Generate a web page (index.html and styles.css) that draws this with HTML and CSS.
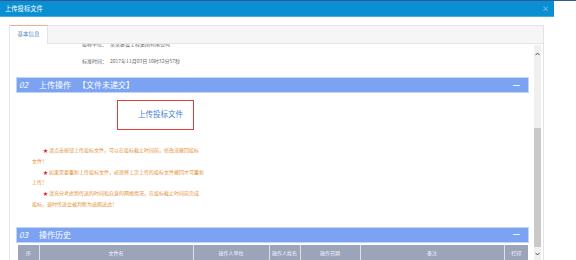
FILE: index.html
```html
<!DOCTYPE html>
<html lang="zh-CN">
<head>
  <meta charset="UTF-8">
  <meta name="viewport" content="width=device-width, initial-scale=1.0">
  <title>上传投标文件</title>
  <link rel="stylesheet" href="styles.css">
</head>
<body>
  <div class="top-strip"></div>

  <div class="dialog">
    <div class="dlg-title">
      <span>上传投标文件</span>
      <span class="dlg-close">×</span>
    </div>

    <div class="dlg-body">
      <div class="tabs">
        <div class="tab-head">
          <div class="tab active">基本信息</div>
        </div>

        <div class="tab-main">
          <div class="scroll-view">
            <div class="scroll-inner">
              <div class="info-row">
                <span class="lbl">投标单位：</span>
                <span>某某建设工程集团有限公司</span>
              </div>
              <div class="info-row">
                <span class="lbl">标准时间：</span>
                <span>2017年11月03日 10时32分57秒</span>
              </div>

              <div class="sec-bar">
                <span class="sec-no">02</span>
                <span class="sec-name">上传操作</span>
                <span class="sec-state">【文件未递交】</span>
                <span class="sec-fold"></span>
              </div>

              <div class="upload-wrap">
                <a href="#" class="upload-btn">上传投标文件</a>
              </div>

              <div class="tips">
                <p><span class="star">★</span>请点击按钮上传投标文件，可以在投标截止时间前，修改或撤回投标<br>文件！</p>
                <p><span class="star">★</span>如果需要重新上传投标文件，必须将上次上传的投标文件撤回才可重新<br>上传！</p>
                <p><span class="star">★</span>请充分考虑到传送的时间和自身的网络情况，在投标截止时间前完成<br>投标，逾时传送会被判断为逾期送达！</p>
              </div>

              <div class="sec-bar sec-bar-2">
                <span class="sec-no">03</span>
                <span class="sec-name">操作历史</span>
                <span class="sec-fold"></span>
              </div>

              <table class="hist">
                <colgroup>
                  <col style="width:21px">
                  <col style="width:154px">
                  <col style="width:76px">
                  <col style="width:31px">
                  <col style="width:60px">
                  <col style="width:144px">
                  <col style="width:24px">
                </colgroup>
                <thead>
                  <tr>
                    <th>序</th>
                    <th>文件名</th>
                    <th>操作人单位</th>
                    <th>操作人姓名</th>
                    <th>操作日期</th>
                    <th>备注</th>
                    <th>打印</th>
                  </tr>
                </thead>
              </table>
            </div>
          </div>

          <div class="vscroll">
            <div class="vs-btn vs-up">
              <svg width="5" height="4" viewBox="0 0 5 4"><path d="M0.5 3.2 L2.5 1 L4.5 3.2" fill="none" stroke="#555" stroke-width="1"/></svg>
            </div>
            <div class="vs-track"></div>
            <div class="vs-thumb"></div>
            <div class="vs-btn vs-down">
              <svg width="5" height="4" viewBox="0 0 5 4"><path d="M0.5 0.8 L2.5 3 L4.5 0.8" fill="none" stroke="#555" stroke-width="1"/></svg>
            </div>
          </div>
        </div>
      </div>
    </div>
  </div>
</body>
</html>
```

FILE: styles.css
```css
:root {
  --title-blue: #0b8fd3;
  --bar-blue: #7ca2f2;
  --bar-line: #c3d4f9;
  --border: #e4e4e4;
  --orange: #e58f33;
}

body {
  margin: 0;
  padding: 0;
  background: #fff;
  font-family: "Noto Sans CJK SC", "Noto Sans", sans-serif;
  color: #555;
  overflow: hidden;
}

.top-strip {
  height: 1px;
  background: #2f5a96;
}

.dialog {
  width: 554px;
  height: 259px;
  background: #fff;
  display: flex;
  flex-direction: column;
}

.dlg-title {
  height: 15px;
  line-height: 15px;
  background: var(--title-blue);
  border-bottom: 1px solid #4aa9de;
  color: #fff;
  font-size: 6.3px;
  padding: 0 5px;
  display: flex;
  justify-content: space-between;
}

.dlg-close {
  color: #b9def3;
  font-size: 7px;
}

.dlg-body {
  flex: 1;
  padding: 8px 10px 0 9px;
  min-height: 0;
}

.tabs {
  height: 100%;
  border: 1px solid var(--border);
  border-bottom: none;
  display: flex;
  flex-direction: column;
}

.tab-head {
  height: 17px;
  background: #f6f6f6;
  border-bottom: 1px solid var(--border);
  display: flex;
}

.tab {
  width: 37px;
  text-align: center;
  font-size: 5.5px;
  line-height: 17px;
  color: #4a86c2;
}

.tab.active {
  background: #fff;
  border-top: 1px solid #f2aa9c;
  border-right: 1px solid var(--border);
  margin-top: -1px;
  height: 18px;
}

.tab-main {
  flex: 1;
  display: flex;
  min-height: 0;
}

.scroll-view {
  flex: 1;
  overflow: hidden;
  padding: 0 5px 0 6px;
}

.scroll-inner {
  margin-top: -9px;
}

.info-row {
  height: 17px;
  line-height: 17px;
  font-size: 5px;
  color: #666;
  padding-left: 66px;
  display: flex;
}

.info-row .lbl {
  width: 28px;
}

.sec-bar {
  margin-top: 8px;
  height: 14px;
  line-height: 14px;
  background: var(--bar-blue);
  border: 1px solid var(--bar-line);
  color: #fff;
  font-size: 8px;
  display: flex;
  align-items: center;
  padding-left: 2px;
}

.sec-bar-2 {
  margin-top: 17px;
}

.sec-no {
  font-style: italic;
  width: 20px;
}

.sec-state {
  margin-left: 7px;
}

.sec-fold {
  margin-left: auto;
  margin-right: 8px;
  width: 7px;
  height: 1px;
  background: #e6eeff;
}

.upload-wrap {
  margin-top: 5px;
  padding-left: 101px;
}

.upload-btn {
  display: inline-block;
  border: 1px solid #e53c3c;
  padding: 8px 10px 11px 20px;
  font-size: 7.5px;
  line-height: 9px;
  color: #3f80d6;
  text-decoration: none;
}

.tips {
  margin: 15px 0 0 16px;
  font-size: 5px;
  line-height: 10.8px;
  color: var(--orange);
}

.tips p {
  margin: 0;
  text-indent: 11px;
}

.star {
  color: #e41f1f;
  margin-right: 1px;
}

.hist {
  margin: 2px 0 0 2px;
  border-collapse: collapse;
  table-layout: fixed;
  width: 510px;
  font-size: 5px;
}

.hist th {
  height: 15px;
  padding: 0;
  background: #9ca4ba;
  color: #f4f6fa;
  font-weight: normal;
  border-left: 1px solid #dde0e8;
}

.hist th:first-child {
  border-left: none;
}

.vscroll {
  width: 7px;
  margin: 1px 2px 0 0;
  background: #f0f0f0;
  display: flex;
  flex-direction: column;
}

.vs-btn {
  display: flex;
  align-items: center;
  justify-content: center;
}

.vs-up {
  height: 18px;
}

.vs-track {
  height: 67px;
}

.vs-thumb {
  height: 121px;
  background: #c9c9c9;
}

.vs-down {
  height: 14px;
}
```
